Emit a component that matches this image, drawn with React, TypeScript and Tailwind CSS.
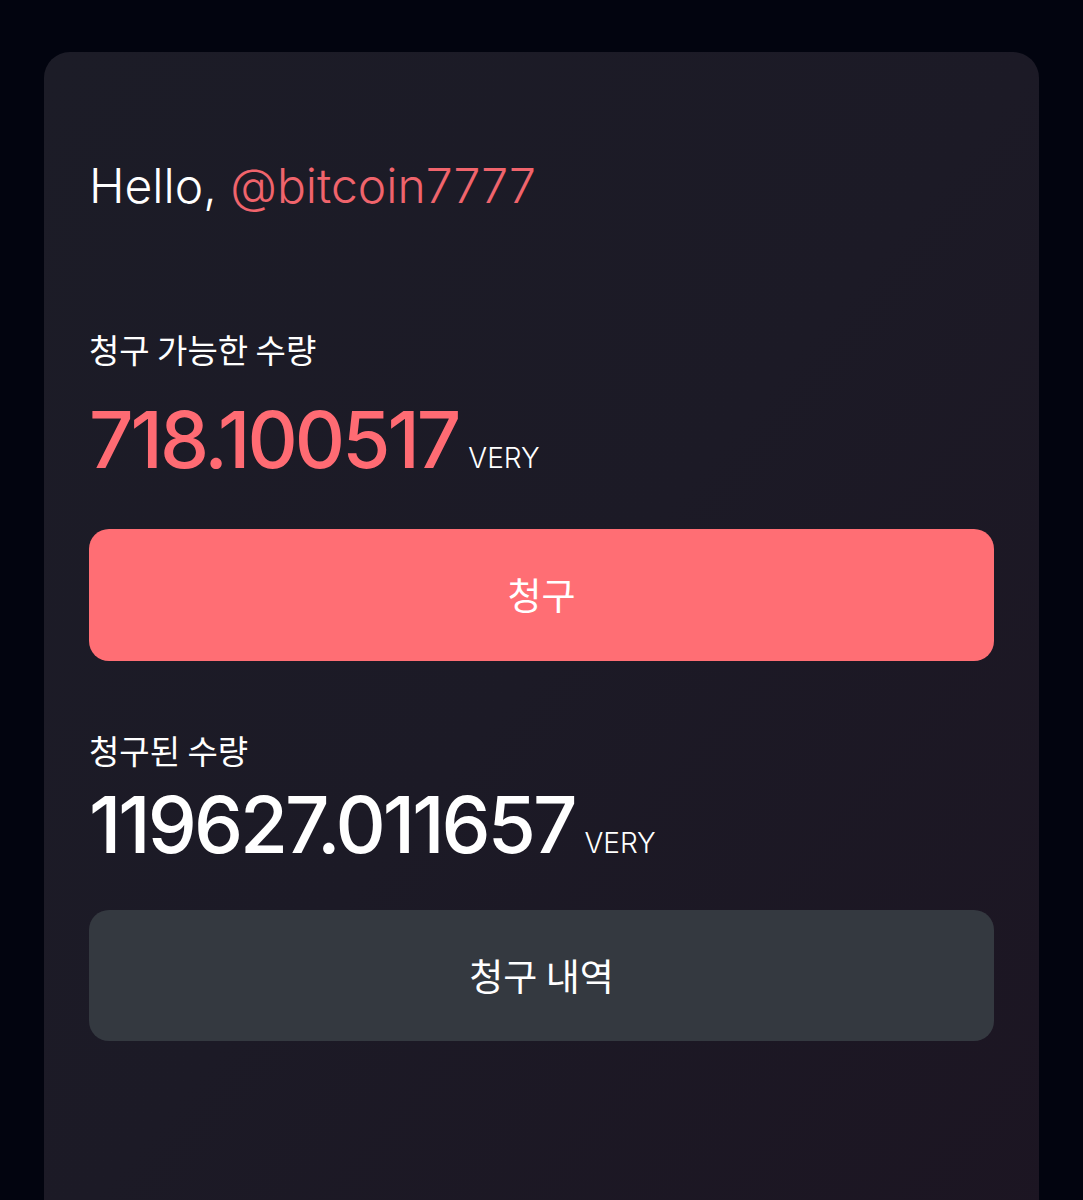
export default function App() {
  return (
    <div className="min-h-[1200px] w-full overflow-hidden bg-[#02040f] px-[44px] pt-[52px] font-['Inter','Noto_Sans_CJK_KR',sans-serif]">
      <div className="min-h-[1200px] rounded-t-[26px] bg-gradient-to-br from-[#1c1c27] via-[#1c1a26] to-[#1c1522] px-[45px] pt-[106px]">
        {/* Greeting */}
        <h1 className="text-[48px] leading-[56px] font-light text-white">
          Hello, <span className="text-[#f0646c]">@bitcoin7777</span>
        </h1>

        {/* Claimable */}
        <p className="mt-[115px] text-[33px] leading-[40px] text-white font-['Noto_Sans_CJK_KR',sans-serif]">
          청구 가능한 수량
        </p>
        <div className="mt-[29px] flex items-baseline gap-[10px] h-[84px]">
          <span className="text-[78px] leading-[84px] font-medium tracking-[-3px] text-[#ff6b73]">718.100517</span>
          <span className="text-[28px] font-light text-white">VERY</span>
        </div>

        <button className="mt-[47px] flex h-[132px] w-full items-center justify-center rounded-[20px] bg-[#ff6e74] text-[37px] text-white font-['Noto_Sans_CJK_KR',sans-serif]">
          청구
        </button>

        {/* Claimed */}
        <p className="mt-[69px] text-[33px] leading-[40px] text-white font-['Noto_Sans_CJK_KR',sans-serif]">
          청구된 수량
        </p>
        <div className="mt-[13px] flex items-baseline gap-[10px] h-[84px]">
          <span className="text-[78px] leading-[84px] font-medium tracking-[-3px] text-white">119627.011657</span>
          <span className="text-[28px] font-light text-white">VERY</span>
        </div>

        <button className="mt-[43px] flex h-[131px] w-full items-center justify-center rounded-[20px] bg-[#343940] text-[37px] text-white font-['Noto_Sans_CJK_KR',sans-serif]">
          청구 내역
        </button>
      </div>
    </div>
  )
}
